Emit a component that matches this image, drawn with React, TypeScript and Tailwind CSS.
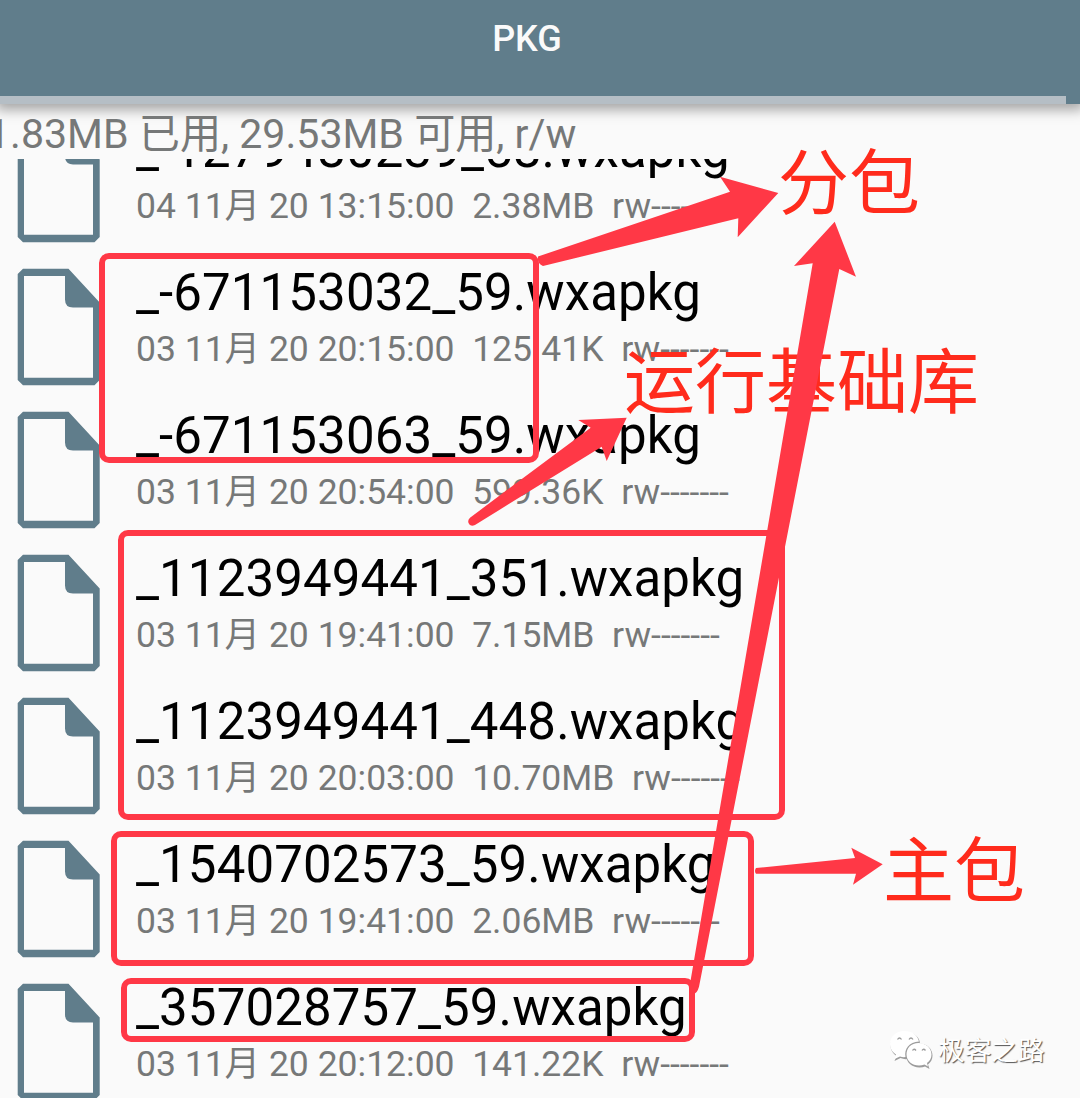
const files = [
  { name: "_-1279480239_58.wxapkg", date: "04 11月 20 13:15:00", size: "2.38MB" },
  { name: "_-671153032_59.wxapkg", date: "03 11月 20 20:15:00", size: "125.41K" },
  { name: "_-671153063_59.wxapkg", date: "03 11月 20 20:54:00", size: "599.36K" },
  { name: "_1123949441_351.wxapkg", date: "03 11月 20 19:41:00", size: "7.15MB" },
  { name: "_1123949441_448.wxapkg", date: "03 11月 20 20:03:00", size: "10.70MB" },
  { name: "_1540702573_59.wxapkg", date: "03 11月 20 19:41:00", size: "2.06MB" },
  { name: "_357028757_59.wxapkg", date: "03 11月 20 20:12:00", size: "141.22K" },
];

function FileIcon() {
  return (
    <svg className="mt-3 ml-[17px] h-[118px] w-[84px] shrink-0" viewBox="0 0 84 118">
      <path
        fillRule="evenodd"
        fill="#607d8b"
        d="M6 .8H51.5L82.7 34.4V112L77.5 117.2H6L.7 112V5.9ZM7 8V109.8H76V39.4H56Q48 39.4 48 31.4V8Z"
      />
    </svg>
  );
}

function FileRow({ name, date, size }: { name: string; date: string; size: string }) {
  return (
    <li className="flex h-[143px] shrink-0">
      <FileIcon />
      <div className="ml-[35px] flex flex-col whitespace-pre pt-[7px]">
        <span className="h-[60px] text-[51px] leading-[60px] tracking-[0.1px] text-black">{name}</span>
        <span className="mt-1 h-11 text-[35.5px] leading-[44px] text-[#767878]">
          {date + "  " + size + "  rw-------"}
        </span>
      </div>
    </li>
  );
}

function Annotations() {
  const box = "absolute rounded-[10px] border-[6px] border-[#ff3846]";
  const label = "absolute whitespace-nowrap leading-[80px] text-[#ff2b1c]";
  return (
    <div className="pointer-events-none absolute inset-0">
      <div className={`${box} left-[99px] top-[253px] h-[210px] w-[440px]`} />
      <div className={`${box} left-[118px] top-[530px] h-[290px] w-[667px]`} />
      <div className={`${box} left-[111px] top-[831px] h-[135px] w-[643px]`} />
      <div className={`${box} left-[121px] top-[978px] h-[64px] w-[574px]`} />
      <span className={`${label} left-[778px] top-[144px] text-[71px]`}>分包</span>
      <span className={`${label} left-[624px] top-[343px] text-[71px]`}>运行基础库</span>
      <span className={`${label} left-[883px] top-[832px] text-[71px]`}>主包</span>
      <svg className="absolute inset-0 h-full w-full" viewBox="0 0 1080 1098" fill="#ff3846">
        <path d="M538 256.5L730 191.7L720 176.7L778.3 193L737.7 237.3L738.3 218.3L543 266Q537 264 538 256.5Z" />
        <path d="M470 517.7L590.7 427.7L578.3 420L626.7 417.7L606.7 461L601.7 446.7L475 525Q470 527 468.5 523Q467.5 520 470 517.7Z" />
        <path d="M834.7 221.7L856 276.7L839.3 269L699 986.7Q697 994 693 994Q688 993 689.3 988L812.7 263.3L794 266Z" />
        <path d="M756 868L855 858L851.3 847.7L882.7 864.3L853 884.7L856 873.7H756Q754 871 756 868Z" />
      </svg>
    </div>
  );
}

function Watermark() {
  return (
    <div className="absolute left-[889px] top-[1028px] flex items-center">
      <svg className="h-[40px] w-[46px]" viewBox="0 0 46 40">
        <g fill="#9c9c9c">
          <path d="M16 2C7 2 1.5 8 1.5 15C1.5 20 4 23.5 7.5 26L5.5 31L11.5 28Q16 30 20 28.5L31 14C31 7 25 2 16 2Z" />
          <path d="M30 13.5C22 13.5 17 19 17 25.5C17 32 23 37.5 30.5 37.5Q34 37.5 36 36.5L40.5 39L39 34.5C42 32 43.5 29 43.5 25.5C43.5 19 38 13.5 30 13.5Z" />
        </g>
        <path
          fill="#fff"
          d="M15.5 1C6.5 1 1 7 1 14C1 19 3.5 22 7 24.5L5.5 29L11 26.5Q14 27.5 16.5 27C15 19 20 12 30 11.5C28.5 5 23 1 15.5 1Z"
        />
        <path
          fill="#fff"
          d="M29.5 13C22 13 17.5 18 17.5 24.5C17.5 31 23 35.5 30 35.5Q33 35.5 35.5 34.5L39 36.5L38 33C41 31 42.5 28 42.5 24.5C42.5 18 37 13 29.5 13Z"
        />
        <path
          fill="none"
          stroke="#9c9c9c"
          strokeWidth="1.3"
          d="M8.5 9.5Q10.5 6.5 12.5 9.5M20 9.5Q22 6.5 24 9.5M23.5 20.5Q25 18 27 20.5M33 20.5Q34.5 18 36.5 20.5"
        />
      </svg>
      <span className="ml-[3px] mt-[3px] whitespace-nowrap text-[26.7px] leading-[40px] text-white [text-shadow:1px_1px_1px_#555]">
        极客之路
      </span>
    </div>
  );
}

export default function App() {
  return (
    <div className="relative flex h-[1098px] w-[1080px] flex-col overflow-hidden bg-[#fafafa] font-[Roboto,'Noto_Sans_CJK_SC',sans-serif]">
      <header className="flex h-[104px] shrink-0 flex-col bg-[#607d8b] shadow-[0_2px_12px_4px_rgba(0,0,0,0.34)]">
        <h1 className="h-[95.5px] shrink-0 pt-[17px] text-center text-[36px] font-medium leading-[44px] text-[#fafafa]">
          <span className="relative -left-[13px]">PKG</span>
        </h1>
        <div className="h-[8.5px] w-[1066px] shrink-0 bg-[#b5bec5]" />
      </header>
      <p className="-ml-[13px] mt-1.5 h-[49px] shrink-0 whitespace-pre text-[41.1px] leading-[49px] text-[#767878]">
        1.83MB 已用, 29.53MB 可用, r/w
      </p>
      <ul className="flex min-h-0 flex-1 flex-col overflow-hidden">
        <li className="-mt-[46px]" />
        {files.map((f) => (
          <FileRow key={f.name} {...f} />
        ))}
      </ul>
      <Annotations />
      <Watermark />
    </div>
  );
}
